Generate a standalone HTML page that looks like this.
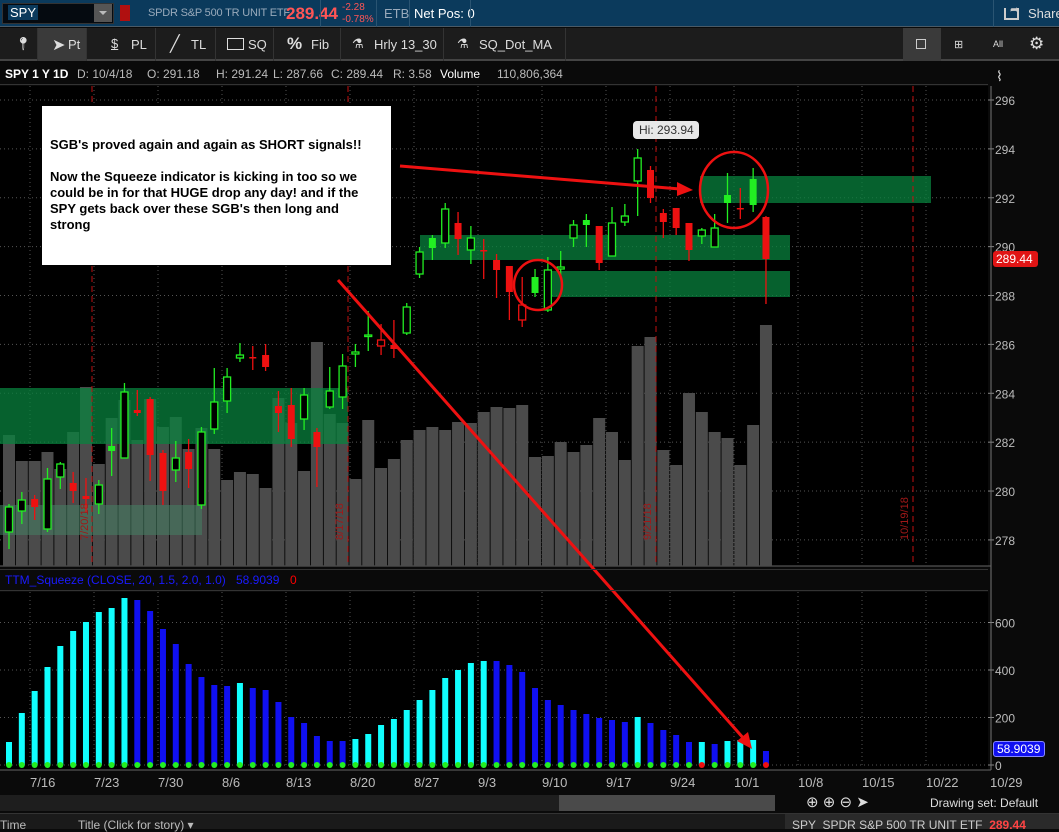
<!DOCTYPE html><html><head><meta charset="utf-8"><style>
*{margin:0;padding:0;box-sizing:border-box}
body{width:1059px;height:829px;background:#0a0a0a;font-family:"Liberation Sans",sans-serif;overflow:hidden;position:relative;color:#ccc}
.a{position:absolute;white-space:nowrap}
</style></head><body>
<!-- top bar -->
<div class="a" style="left:0;top:0;width:1059px;height:27px;background:#0b3a5c;border-bottom:1px solid #4a5a66"></div>
<div class="a" style="left:2px;top:3px;width:112px;height:21px;background:#050a10;border:1px solid #333"></div>
<div class="a" style="left:8px;top:5px;font-size:13px;color:#fff;background:#0b3a5c;padding:0 2px">SPY</div>
<div class="a" style="left:94px;top:4px;width:18px;height:18px;background:#555"></div>
<div class="a" style="left:99px;top:11px;border:4px solid transparent;border-top:4px solid #bbb"></div>
<div class="a" style="left:120px;top:5px;width:10px;height:16px;background:#b01010"></div>
<div class="a" style="left:148px;top:7px;font-size:11px;color:#9ab;letter-spacing:-0.2px">SPDR S&amp;P 500 TR UNIT ETF</div>
<div class="a" style="left:286px;top:4px;font-size:17px;font-weight:bold;color:#f55">289.44</div>
<div class="a" style="left:342px;top:2px;font-size:10px;color:#f55;line-height:12px">-2.28<br>-0.78%</div>
<div class="a" style="left:384px;top:6px;font-size:13px;color:#9ab">ETB</div>
<div class="a" style="left:414px;top:6px;font-size:13px;color:#fff">Net Pos: 0</div>
<div class="a" style="left:320px;top:0;width:1px;height:27px;background:#2a5472"></div>
<div class="a" style="left:376px;top:0;width:1px;height:27px;background:#2a5472"></div>
<div class="a" style="left:409px;top:0;width:1px;height:27px;background:#2a5472"></div>
<div class="a" style="left:470px;top:0;width:1px;height:27px;background:#2a5472"></div>
<div class="a" style="left:993px;top:0;width:1px;height:27px;background:#2a5472"></div>
<div class="a" style="left:1004px;top:8px;width:15px;height:12px;border:2px solid #ccc;border-top:none"></div>
<div class="a" style="left:1010px;top:3px;font-size:11px;color:#ccc">➦</div>
<div class="a" style="left:1028px;top:6px;font-size:13px;color:#ddd">Share</div>
<!-- toolbar -->
<div class="a" style="left:0;top:28px;width:1059px;height:33px;background:#1c1c1c;border-bottom:2px solid #444"></div>
<div class="a" style="left:37px;top:28px;width:49px;height:33px;background:#3a3a3a"></div>
<div class="a" style="left:903px;top:28px;width:38px;height:33px;background:#3a3a3a"></div>
<div class="a" style="left:0;top:36px;font-size:13px;color:#ddd;width:1059px;height:20px">
<span class="a" style="left:15px;top:0">📍︎</span>
<span class="a" style="left:52px;top:-1px;font-size:16px">➤</span><span class="a" style="left:68px;top:1px">Pt</span>
<span class="a" style="left:111px;top:0;text-decoration:underline">$</span><span class="a" style="left:131px;top:1px">PL</span>
<span class="a" style="left:170px;top:-2px;font-size:16px">╱</span><span class="a" style="left:191px;top:1px">TL</span>
<span class="a" style="left:227px;top:2px;width:17px;height:12px;border:1.5px solid #ddd"></span><span class="a" style="left:248px;top:1px">SQ</span>
<span class="a" style="left:287px;top:-2px;font-size:17px;font-weight:bold">%</span><span class="a" style="left:311px;top:1px">Fib</span>
<span class="a" style="left:352px;top:0">⚗</span><span class="a" style="left:374px;top:1px">Hrly 13_30</span>
<span class="a" style="left:457px;top:0">⚗</span><span class="a" style="left:479px;top:1px">SQ_Dot_MA</span>
<span class="a" style="left:916px;top:3px;width:10px;height:10px;border:1.5px solid #ccc"></span>
<span class="a" style="left:954px;top:2px;font-size:11px;letter-spacing:-1px">⊞</span>
<span class="a" style="left:993px;top:3px;font-size:9px">All</span>
<span class="a" style="left:1029px;top:-2px;font-size:17px">⚙</span>
</div>
<div class="a" style="left:37px;top:28px;width:1px;height:33px;background:#333"></div>
<div class="a" style="left:86px;top:28px;width:1px;height:33px;background:#333"></div>
<div class="a" style="left:155px;top:28px;width:1px;height:33px;background:#333"></div>
<div class="a" style="left:215px;top:28px;width:1px;height:33px;background:#333"></div>
<div class="a" style="left:273px;top:28px;width:1px;height:33px;background:#333"></div>
<div class="a" style="left:340px;top:28px;width:1px;height:33px;background:#333"></div>
<div class="a" style="left:443px;top:28px;width:1px;height:33px;background:#333"></div>
<div class="a" style="left:565px;top:28px;width:1px;height:33px;background:#333"></div>
<!-- info row -->
<div class="a" style="left:0;top:63px;width:988px;height:22px;background:#0a0a0a;border-bottom:1px solid #333;font-size:12px;color:#bbb">
<span class="a" style="left:5px;top:4px;color:#fff;font-weight:bold">SPY 1 Y 1D</span>
<span class="a" style="left:77px;top:4px">D: 10/4/18</span>
<span class="a" style="left:147px;top:4px">O: 291.18</span>
<span class="a" style="left:216px;top:4px">H: 291.24</span>
<span class="a" style="left:273px;top:4px">L: 287.66</span>
<span class="a" style="left:331px;top:4px">C: 289.44</span>
<span class="a" style="left:393px;top:4px">R: 3.58</span>
<span class="a" style="left:440px;top:4px;color:#fff">Volume</span>
<span class="a" style="left:497px;top:4px">110,806,364</span>
</div>
<svg class="a" style="left:0;top:0" width="1059" height="829" id="s"></svg>
<!-- text box -->
<div class="a" style="left:42px;top:106px;width:349px;height:159px;background:#fff;color:#000;font-size:13px;font-weight:bold;line-height:16px;padding:31px 18px 0 8px;white-space:normal">SGB's proved again and again as SHORT signals!!<br><br>Now the Squeeze indicator is kicking in too so we could be in for that HUGE drop any day! and if the SPY gets back over these SGB's then long and strong</div>
<div class="a" style="left:633px;top:121px;height:18px;background:#e8e8e8;border-radius:4px;color:#333;font-size:12px;padding:2px 5px 0 6px">Hi: 293.94</div>
<div class="a" style="left:993px;top:251px;width:45px;height:16px;background:#e01515;border-radius:3px;color:#fff;font-size:12px;padding:1px 0 0 3px">289.44</div>
<div class="a" style="left:993px;top:741px;width:52px;height:16px;background:#1010f0;border:1px solid #88f;border-radius:3px;color:#fff;font-size:12px;padding:0 0 0 3px">58.9039</div>
<!-- squeeze header -->
<div class="a" style="left:0;top:569px;width:988px;height:22px;border-top:1px solid #333;border-bottom:1px solid #333;font-size:12px;color:#1a1aff">
<span class="a" style="left:5px;top:3px">TTM_Squeeze (CLOSE, 20, 1.5, 2.0, 1.0)</span>
<span class="a" style="left:236px;top:3px">58.9039</span>
<span class="a" style="left:290px;top:3px;color:#f00">0</span>
</div>
<!-- scrollbar and bottom -->
<div class="a" style="left:0;top:795px;width:775px;height:16px;background:#1e1e1e"></div>
<div class="a" style="left:559px;top:795px;width:216px;height:16px;background:#4a4a4a"></div>
<div class="a" style="left:806px;top:793px;font-size:15px;color:#ddd">⊕ ⊕ ⊖ ➤</div>
<div class="a" style="left:930px;top:796px;font-size:12px;color:#ddd">Drawing set: Default</div>
<div class="a" style="left:0;top:813px;width:1059px;height:16px;background:#1a1a1a;border-top:1px solid #333"></div>
<div class="a" style="left:0;top:818px;font-size:12px;color:#bbb">Time</div>
<div class="a" style="left:78px;top:818px;font-size:12px;color:#bbb">Title (Click for story) ▾</div>
<div class="a" style="left:785px;top:814px;width:274px;height:15px;background:#2a2a2a"></div>
<div class="a" style="left:792px;top:818px;font-size:12px;color:#ccc">SPY &nbsp;SPDR S&amp;P 500 TR UNIT ETF &nbsp;<b style="color:#f44">289.44</b></div>
<script>
var s=document.getElementById('s'),h='';
function R(x,y,w,hh,f,st){h+='<rect x="'+x+'" y="'+y+'" width="'+w+'" height="'+hh+'" fill="'+f+'"'+(st||'')+'/>';}
function L(x1,y1,x2,y2,c,w,d){h+='<line x1="'+x1+'" y1="'+y1+'" x2="'+x2+'" y2="'+y2+'" stroke="'+c+'" stroke-width="'+(w||1)+'"'+(d?' stroke-dasharray="'+d+'"':'')+'/>';}
function T(x,y,t,c,fs,ex){h+='<text x="'+x+'" y="'+y+'" fill="'+c+'" font-size="'+(fs||12)+'" font-family="Liberation Sans,sans-serif" '+(ex||'')+'>'+t+'</text>';}
R(0,86,988,480,'#000');R(0,592,988,178,'#000');
R(988,62,71,710,'#0a0a0a');
for(var x=30;x<988;x+=64){L(x,86,x,566,'#555',1,'1 3');L(x,592,x,768,'#555',1,'1 3');}
for(var p=278;p<=296;p+=2){var y=100+(296-p)*24.44;L(0,y,988,y,'#555',1,'1 3');L(988,y,994,y,'#888');T(995,y+5,p,'#bbb',12);}
[0,200,400,600].forEach(function(v){var y=765-v*0.2375;L(0,y,988,y,'#555',1,'1 3');L(988,y,994,y,'#888');T(995,y+5,v,'#bbb',12);});
L(991,86,991,770,'#777');L(0,566,991,566,'#666');L(0,770,991,770,'#666');
T(996,81,'⌇','#ddd',14);
var vol=[435,461,461,452,469,432,387,464,418,400,440,399,427,417,449,428,449,480,472,474,488,398,423,471,342,414,423,479,420,468,459,440,430,427,430,422,423,412,407,408,405,457,456,442,452,445,418,432,460,346,337,450,465,393,412,432,438,465,425,325];
function cx(i){return 9+i*12.83;}
vol.forEach(function(t,i){R(cx(i)-6,t,12,566-t,'#4b4b4b');});
var z='rgba(8,130,62,0.75)';
R(0,388,348,56,z);R(0,505,202,30,'rgba(70,130,100,0.55)');R(420,235,370,25,z);R(548,271,242,26,z);R(700,176,231,27,z);
[92,348,656,913].forEach(function(x){L(x,86,x,566,'#c01010',1,'6 4');});
[[88,'7/20/18'],[343,'8/17/18'],[651,'9/21/18'],[908,'10/19/18']].forEach(function(a){T(a[0],540,a[1],'#a01818',11,'transform="rotate(-90 '+a[0]+' 540)"');});
var c=[[507,532,504,549,'g'],[500,511,492,524,'g'],[499,507,495,520,'r'],[479,529,468,532,'g'],[464,477,462,489,'g'],[483,491,472,503,'r'],[496,499,478,512,'r'],[485,504,480,514,'g'],[446,451,428,476,'G'],[392,458,383,458,'g'],[410,413,390,416,'r'],[399,455,397,481,'r'],[453,491,450,505,'r'],[458,470,441,482,'g'],[452,469,439,488,'r'],[432,505,427,509,'g'],[402,429,368,434,'g'],[377,401,368,413,'g'],[355,358,343,362,'g'],[357,358,346,370,'r'],[355,367,344,371,'r'],[406,413,391,432,'r'],[405,439,388,447,'r'],[395,419,388,430,'g'],[432,447,428,487,'r'],[391,407,367,409,'g'],[366,397,354,409,'g'],[352,354,344,367,'g'],[335,336,311,351,'g'],[340,346,324,355,'q'],[345,349,320,358,'r'],
[307,333,303,335,'g'],[252,274,247,278,'g'],[238,248,235,260,'G'],[209,243,203,248,'g'],[223,239,212,255,'r'],[238,250,226,264,'g'],[250,251,239,279,'r'],[260,270,254,298,'r'],[266,292,266,320,'r'],[305,320,277,327,'q'],[277,293,269,297,'G'],[270,310,257,312,'g'],[267,269,251,275,'g'],[225,238,220,247,'g'],[220,225,214,247,'G'],[226,263,226,270,'r'],[223,256,207,256,'g'],[216,222,204,226,'g'],[158,181,149,216,'g'],[170,198,166,203,'r'],[213,222,209,238,'r'],[208,228,208,235,'r'],[223,250,223,261,'r'],[230,236,228,244,'g'],[228,247,214,247,'g'],[195,203,173,223,'G'],[208,209,188,219,'r'],[179,205,168,212,'G'],[217,259,216,304,'r']];
c.forEach(function(k,i){var x=cx(i),col=(k[4]=='g'||k[4]=='G')?'#22ee22':'#ee1111';L(x,k[2],x,k[3],col,1.3);
var hh=Math.max(k[1]-k[0],1.5);
if(k[4]=='g'||k[4]=='q')R(x-3.5,k[0],7,hh,'#000',' stroke="'+col+'" stroke-width="1.3"');else R(x-3.5,k[0],7,hh,col);});
var sq=[742,713,691,667,646,631,622,612,608,598,600,611,629,644,664,677,685,686,683,688,690,702,717,723,736,741,741,739,734,725,719,710,700,690,678,670,663,661,661,665,672,688,700,705,710,714,718,720,722,717,723,730,735,742,742,744,741,740,740,751];
var cy=[0,1,2,3,4,5,6,7,8,9,18,27,28,29,30,31,32,33,34,35,36,37,49,54,56,57,58];
sq.forEach(function(t,i){R(cx(i)-3,t,6,765-t,cy.indexOf(i)>=0?'#11ffff':'#1010f0');});
sq.forEach(function(t,i){h+='<circle cx="'+cx(i)+'" cy="765" r="3" fill="'+((i==54||i==59)?'#f01010':'#22ee22')+'"/>';});
['7/16','7/23','7/30','8/6','8/13','8/20','8/27','9/3','9/10','9/17','9/24','10/1','10/8','10/15','10/22','10/29'].forEach(function(d,i){T(30+i*64,787,d,'#bbb',13,'text-anchor="start"');});
L(400,166,680,189,'#ee1111',3);h+='<polygon points="693,190 677,182 677,196" fill="#ee1111"/>';
L(338,280,745,740,'#ee1111',3);h+='<polygon points="752,749 737,741 748,732" fill="#ee1111"/>';
h+='<ellipse cx="538" cy="285" rx="24" ry="25" fill="none" stroke="#ee1111" stroke-width="2.5"/>';
h+='<ellipse cx="734" cy="190" rx="34" ry="38" fill="none" stroke="#ee1111" stroke-width="2.5"/>';
s.innerHTML=h;
</script>
</body></html>
